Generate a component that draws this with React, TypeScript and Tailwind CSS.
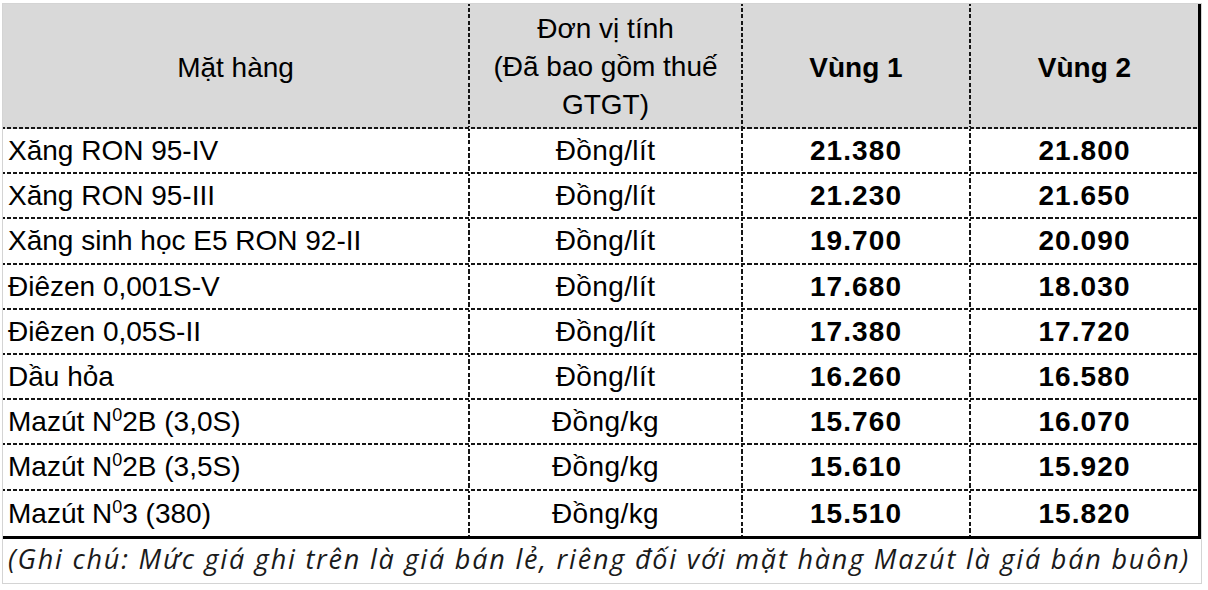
import React from "react";

type Row = { name: React.ReactNode; unit: string; v1: string; v2: string };

const Sup0 = () => (
  <span className="relative top-[-10px] text-[18px] leading-none">0</span>
);

const rows: Row[] = [
  { name: "Xăng RON 95-IV", unit: "Đồng/lít", v1: "21.380", v2: "21.800" },
  { name: "Xăng RON 95-III", unit: "Đồng/lít", v1: "21.230", v2: "21.650" },
  { name: "Xăng sinh học E5 RON 92-II", unit: "Đồng/lít", v1: "19.700", v2: "20.090" },
  { name: "Điêzen 0,001S-V", unit: "Đồng/lít", v1: "17.680", v2: "18.030" },
  { name: "Điêzen 0,05S-II", unit: "Đồng/lít", v1: "17.380", v2: "17.720" },
  { name: "Dầu hỏa", unit: "Đồng/lít", v1: "16.260", v2: "16.580" },
  { name: <>Mazút N<Sup0 />2B (3,0S)</>, unit: "Đồng/kg", v1: "15.760", v2: "16.070" },
  { name: <>Mazút N<Sup0 />2B (3,5S)</>, unit: "Đồng/kg", v1: "15.610", v2: "15.920" },
  { name: <>Mazút N<Sup0 />3 (380)</>, unit: "Đồng/kg", v1: "15.510", v2: "15.820" },
];

const HLINE =
  "border-solid border-b-2 [border-image:repeating-linear-gradient(90deg,#151515_0_4px,transparent_4px_6px)_2]";
const VLINE =
  "border-solid border-r-2 [border-image:repeating-linear-gradient(180deg,#151515_0_4px,transparent_4px_6px)_2]";

export default function App() {
  return (
    <div className="w-[1208px] h-[590px] bg-white pt-[3px] pl-[2px] font-['Liberation_Sans',Arial,sans-serif] text-black">
      <div className="w-[1200px] border border-[#d4d4d4]">
        <div className="border-r-[3px] border-b-[3px] border-black">
          {/* header */}
          <div className={`flex h-[125px] bg-[#d9d9d9] text-[28px] ${HLINE}`}>
            <div className={`w-[467px] shrink-0 flex items-center justify-center pt-[4px] ${VLINE}`}>
              Mặt hàng
            </div>
            <div className={`w-[273px] shrink-0 flex items-center justify-center text-center leading-[38px] pt-[2px] ${VLINE}`}>
              <div>
                Đơn vị tính
                <br />
                (Đã bao gồm thuế
                <br />
                GTGT)
              </div>
            </div>
            <div className={`w-[228px] shrink-0 flex items-center justify-center font-bold pt-[4px] ${VLINE}`}>
              Vùng 1
            </div>
            <div className="flex-1 flex items-center justify-center font-bold pt-[4px]">
              Vùng 2
            </div>
          </div>
          {rows.map((r, i) => (
            <div
              key={i}
              className={`flex h-[45.2px] text-[28px] leading-none ${
                i < rows.length - 1 ? HLINE : ""
              }`}
            >
              <div className={`w-[467px] shrink-0 flex items-center pl-[5px] pt-[1px] whitespace-nowrap ${VLINE}`}>
                <span>{r.name}</span>
              </div>
              <div className={`w-[273px] shrink-0 flex items-center justify-center pt-[1px] tracking-[0.4px] ${VLINE}`}>
                {r.unit}
              </div>
              <div className={`w-[228px] shrink-0 flex items-center justify-center font-bold pt-[1px] tracking-[1.1px] ${VLINE}`}>
                {r.v1}
              </div>
              <div className="flex-1 flex items-center justify-center font-bold pt-[1px] tracking-[1.1px]">
                {r.v2}
              </div>
            </div>
          ))}
        </div>
        <div className="h-[44px] flex items-center pl-[5px] pb-[2px] font-['Open_Sans',sans-serif] italic text-[27px] tracking-[1.8px] text-[#1a1a1a] whitespace-nowrap">
          (Ghi chú: Mức giá ghi trên là giá bán lẻ, riêng đối với mặt hàng Mazút là giá bán buôn)
        </div>
      </div>
    </div>
  );
}
